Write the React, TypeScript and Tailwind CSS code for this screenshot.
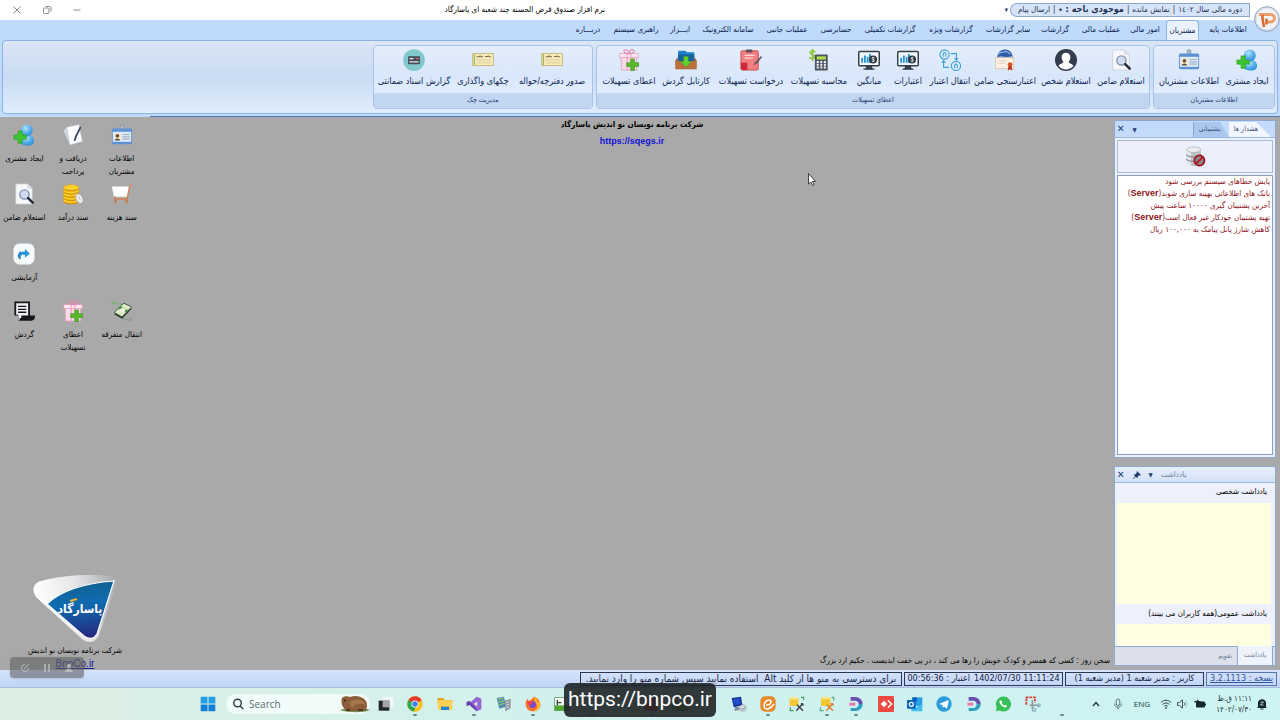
import React from "react";
import type { ReactNode } from "react";

type IconProps = { className?: string };
type Icon = (props: IconProps) => ReactNode;

const svg = (children: ReactNode): Icon =>
  function Drawing({ className = "size-6" }: IconProps) {
    return (
      <svg viewBox="0 0 24 24" className={className + " shrink-0"} fill="none" aria-hidden="true">
        {children}
      </svg>
    );
  };

const AddCustomer = svg(
  <>
    <defs>
      <radialGradient id="person" cx=".4" cy=".3" r=".8">
        <stop offset="0" stopColor="#b4e4ff" />
        <stop offset=".6" stopColor="#4ba9e8" />
        <stop offset="1" stopColor="#2b86cf" />
      </radialGradient>
    </defs>
    <path d="M8 19c0-5 3-7.500 7.500-7.500S23 15 23 18.500c0 3.500-3 5-7 5s-8-1.500-8-4.500z" fill="url(#person)" />
    <circle cx="15" cy="7" r="6.500" fill="url(#person)" />
    <path d="M5.500 7.500h4.500v4.500h4.500v4.500h-4.500v4.500h-4.500v-4.500H1V12h4.500z" fill="#3fc431" stroke="#2c9d22" strokeWidth=".7" />
  </>
);
const IdCard = svg(
  <>
    <path d="M10 1h4v5h-4z" fill="#aeb6bf" stroke="#7b858f" strokeWidth=".6" />
    <rect x="1" y="5" width="22" height="17" rx="1.500" fill="#5f92d4" />
    <rect x="2" y="8.500" width="20" height="11" fill="#dbe9f8" />
    <rect x="3.500" y="10" width="7" height="8" fill="#f6e7c8" />
    <circle cx="7" cy="12.800" r="2" fill="#6e4c33" />
    <path d="M4 18c0-3 6-3 6 0z" fill="#5b5346" />
    <path d="M12.500 11.500h8M12.500 14h8M12.500 16.500h8" stroke="#a9b4c2" strokeWidth="1.200" />
  </>
);
const SearchDoc = svg(
  <>
    <path d="M3 1h13l5 5v17H3z" fill="#f7f8fa" stroke="#c5cad2" strokeWidth=".8" />
    <path d="M16 1v5h5" fill="#dfe3e9" stroke="#c5cad2" strokeWidth=".6" />
    <circle cx="12.500" cy="12.500" r="5" fill="#cfdcf3" stroke="#7f90ab" strokeWidth="1.500" />
    <path d="M16.500 16.500l5 5" stroke="#262c3a" strokeWidth="2.800" strokeLinecap="round" />
  </>
);
const Person = svg(
  <>
    <circle cx="12" cy="12" r="12" fill="#343d4d" />
    <path d="M12 4c3 0 4.800 2 4.800 5 0 2-.8 3.800-2 5 .2 2 4.200 2 5.200 4.500C18 21 15 22.300 12 22.300S6 21 4 18.500C5 16 9 16 9.200 14c-1.200-1.200-2-3-2-5C7.200 6 9 4 12 4z" fill="#fff" />
  </>
);
const Certificate = svg(
  <>
    <circle cx="12" cy="9" r="8.500" fill="#2d5da8" />
    <path d="M5 6c3-5 5-1 7-3s3 2 6 2M4 10c5-4 8 2 16-2" stroke="#93bdec" strokeWidth="1.300" />
    <rect x="1.500" y="9.500" width="20" height="12" fill="#fbf1e4" stroke="#d6bda0" strokeWidth=".8" />
    <path d="M4 13h10M4 15.500h8" stroke="#d8c8b6" />
    <circle cx="17.500" cy="17" r="2.600" fill="#d6542c" />
    <path d="M15.800 18.500l-.8 5 2.500-1.500 2.500 1.500-.8-5z" fill="#b8321d" />
  </>
);
const Transfer = svg(
  <g stroke="#3da0d4" strokeWidth="1.200">
    <circle cx="6" cy="6" r="5" />
    <path d="M4.500 8.500V5.500a1.500 1.500 0 013 0V8.500M13 5h6v7m-2-2l2 2.300L21 10M11 20H5v-7m-2 2l2-2.300L7 15" />
    <circle cx="18.500" cy="18.500" r="5" />
    <path d="M17 21V18a1.500 1.500 0 013 0v3" />
  </g>
);
const Monitor = svg(
  <>
    <path d="M9 18h6l1 4H8z" fill="#39434f" />
    <rect x=".8" y="2.800" width="22.400" height="15.500" rx="1" fill="#f5fafd" stroke="#333d49" strokeWidth="1.600" />
    <path d="M4.500 15V9.500M7.500 15V7M10.500 15V8.500M13 15V5.500" stroke="#2593cf" strokeWidth="2" />
    <circle cx="16.500" cy="11.500" r="4.300" fill="#2c3540" />
    <path d="M18 9.800c-1-1-3-.6-2.800.5.200 1.200 2.800.9 2.800 2.200 0 1.200-2 1.400-3 .5M16.500 8.500v6" stroke="#fff" strokeWidth=".8" />
    <path d="M6 22h12" stroke="#333d49" strokeWidth="1.200" />
  </>
);
const Calculator = svg(
  <>
    <path d="M8 3.500C6 1.500 2 2 2.300 4.300c.2 2 5 1.700 5 4.200C7.300 11 3 11 1.500 9M5 0v13" stroke="#8fc63d" strokeWidth="1.800" />
    <rect x="7.500" y="6" width="14" height="17.500" rx="1" fill="#4c5560" />
    <rect x="9.500" y="8" width="10" height="3.500" fill="#b4d94c" />
    <path d="M9.500 14.200h10M9.500 17.200h10M9.500 20.200h10" stroke="#f4f6f8" strokeWidth="2" strokeDasharray="2.200 1.700" />
  </>
);
const Clipboard = svg(
  <>
    <rect x="1" y="2" width="19" height="21" rx="1.500" fill="#ef7f80" stroke="#c94e55" />
    <rect x="6.500" y=".6" width="7" height="3.200" rx="1" fill="#59515c" />
    <path d="M5 7h11M5 10h9" stroke="#fbd9d6" strokeWidth="1.500" />
    <path d="M1 15h7v8H2.500L1 21.500z" fill="#cf2737" />
    <path d="M23 7.500l-6.500 7-2 3.500 3.500-2 6-7z" fill="#5c5560" />
  </>
);
const Inbox = svg(
  <>
    <path d="M3.500 2h8l1.500 1.500h8V13h-18z" fill="#1f7fc4" />
    <path d="M3.500 6h17.500v7H3.500z" fill="#16639f" />
    <path d="M.5 12L3 9v4h18V9l2.500 3v10H.5z" fill="#9a5c30" />
    <rect x=".5" y="13" width="23" height="8.500" rx=".8" fill="#b9713d" />
    <path d="M9.500 8h5v5.500h3.500L12 19.500l-6-6h3.500z" fill="#63d42f" stroke="#31941a" strokeWidth=".6" />
  </>
);
const Gift = svg(
  <>
    <rect x="3.500" y="8" width="17" height="15" fill="#fbd9e8" stroke="#df9bbd" strokeWidth=".8" />
    <rect x="2" y="5" width="20" height="4.500" fill="#fde6f0" stroke="#df9bbd" strokeWidth=".8" />
    <path d="M10 5v18M14 5v18" stroke="#e893b9" />
    <path d="M12 5C8 5 5 3 7 1.300S12 2 12 5zm0 0c4 0 7-2 5-3.700S12 2 12 5z" stroke="#e08bb2" strokeWidth="1.200" />
    <path d="M14 11h4v4h4.500v4H18v4.500h-4V19H9.500v-4H14z" fill="#58ba2b" stroke="#3f961b" strokeWidth=".7" />
  </>
);
const Cheque = svg(
  <>
    <rect x=".7" y="5" width="22.600" height="13" fill="#f6ebbb" stroke="#c9b679" />
    <path d="M2.500 5.500v12" stroke="#8fae58" strokeWidth="1.200" />
    <path d="M5 8.500h3l.8-1 1 1H12m2-.3h3l.7-.7 1 1h2" stroke="#7e7250" strokeWidth="1.100" />
    <path d="M5 12h15.500M5 15h15.500" stroke="#d5c48a" strokeWidth=".8" />
  </>
);
const Deposit = svg(
  <>
    <circle cx="12" cy="12" r="11.800" fill="#80c8cb" />
    <rect x="5.500" y="8" width="13" height="8.500" rx=".8" fill="#454b58" />
    <path d="M7 10.500h4.500M7 14h10" stroke="#e8eaec" strokeWidth="1.300" />
    <path d="M14 10.500h3" stroke="#e46a5d" strokeWidth="1.300" />
  </>
);
const Paper = svg(
  <>
    <path d="M1.500 7l5-4 7 16-5 3z" fill="#cfd6e2" />
    <path d="M5 3.500L18.500.5l3.800 18.500L8.500 23z" fill="#fbfcfe" stroke="#b9c0cc" strokeWidth=".7" />
    <path d="M20 4l-5 10-1 3.500" stroke="#39465d" strokeWidth="2" strokeLinecap="round" />
  </>
);
const Coins = svg(
  <>
    {[19, 15.5, 12, 8.5, 5].map((y) => (
      <g key={y}>
        <ellipse cx="10" cy={y + 1} rx="8.500" ry="3.300" fill="#d08f05" />
        <ellipse cx="10" cy={y} rx="8.500" ry="3" fill="#fdd22e" stroke="#e5a60e" strokeWidth=".6" />
      </g>
    ))}
    <ellipse cx="19" cy="17" rx="3.600" ry="5.500" transform="rotate(-24 19 17)" fill="#eef0f0" stroke="#a5a9ab" />
    <path d="M18 14l2 5" stroke="#b4b7b9" />
  </>
);
const Cart = svg(
  <>
    <path d="M1 4h18.500l-2 11H3.500z" fill="#fff" stroke="#eee5df" strokeWidth=".6" />
    <path d="M22.500 1.500l-2 1.500L17.500 17.500H4l1-3" stroke="#dc7c49" strokeWidth="1.300" />
    <path d="M5.500 18l-1 4M16.500 18l1 4" stroke="#c9764a" strokeWidth="2.200" />
  </>
);
const Share = svg(
  <>
    <rect x=".5" y=".5" width="23" height="23" rx="7" fill="#f6fafd" />
    <path d="M13 6.500l5.500 5-5.500 4.500v-3c-3.500-.4-5.200.8-4.500 4-4.500-2.500-3-7.500 4.500-7.700z" fill="#2c97d8" />
    <path d="M8.300 17.500c-3.800-2.600-2.500-6.500.7-7.800" stroke="#1a72b8" strokeWidth="1.300" />
  </>
);
const Scroll = svg(
  <>
    <path d="M1.500 1.500h17V17H24c0 4-1.500 5.500-4 5.500H5.500c2.500 0 2.500-2 2.500-5.500H1.500z" fill="#15171b" />
    <path d="M3.500 3.500h13V17H9v2.500H7L6 16H3.500z" fill="#f1f2f4" />
    <path d="M5.500 7h9M5.500 10.200h9M5.500 13.400h9" stroke="#15171b" strokeWidth="1.500" />
  </>
);
const Money = svg(
  <>
    <path d="M1 3l11 1.500M1 3l3-2M1 3l2.500 2.500" stroke="#7fb07d" strokeWidth="1.300" />
    <path d="M3.500 15.500L14 5.500l8.500 4-10.500 11z" fill="#24352a" />
    <path d="M3.500 13.500L14 3.500l8.500 4-10.500 11z" fill="#dce9c4" stroke="#35563a" />
    <path d="M8 9.500l8.500 4.500 2.500-2.500-8.500-4.500z" fill="#4a8d43" />
    <ellipse cx="12.800" cy="11" rx="3" ry="2.200" fill="#eef5df" />
    <path d="M13 20.500l10 1.500m-2.500-3l2.500 3-3 1.500" stroke="#8a9c93" strokeWidth="1.300" />
  </>
);
const DatabaseBlocked = svg(
  <>
    <path d="M2 4v15c0 5 16 5 16 0V4z" fill="#bfc1c5" />
    <path d="M2 4v15c0 2 2 3.500 5 3.800V6z" fill="#e7e8ea" />
    <ellipse cx="10" cy="4.200" rx="8" ry="3.200" fill="#ededf0" stroke="#a8abb0" strokeWidth=".8" />
    <path d="M2 9.500c0 4 16 4 16 0M2 14.500c0 4 16 4 16 0" stroke="#7b7f86" strokeWidth="1.200" />
    <circle cx="16.500" cy="16.500" r="5.800" fill="#8f8587" stroke="#9c1620" strokeWidth="2" />
    <path d="M12.700 20.200l7.600-7.400" stroke="#b4141f" strokeWidth="2" />
  </>
);

/* Taskbar icons */
const Windows = svg(
  <g fill="#1581d6">
    <path d="M1 1h10.300v10.300H1zM12.700 1H23v10.300H12.700z" fill="#25a0e6" />
    <path d="M1 12.700h10.300V23H1zM12.700 12.700H23V23H12.700z" />
  </g>
);
const TaskView = svg(
  <>
    <rect x="7" y="2" width="16" height="15" fill="#f5f6f6" />
    <rect x="1" y="7" width="16" height="15" fill="#20252a" />
    <rect x="7" y="7" width="10" height="10" fill="#a4a7aa" />
  </>
);
const Chrome = svg(
  <>
    <circle cx="12" cy="12" r="11.500" fill="#fbc116" />
    <path d="M12 12L2 6.200A11.500 11.500 0 0122 6.200z" fill="#e33b2e" />
    <path d="M12 12L2 6.200A11.500 11.500 0 0010 23.300l3-6z" fill="#2da94f" />
    <circle cx="12" cy="12" r="5.300" fill="#fff" />
    <circle cx="12" cy="12" r="4.100" fill="#3b7de9" />
  </>
);
const Explorer = svg(
  <>
    <path d="M1 3h8l2.500 3H23v5H1z" fill="#e2a216" />
    <rect x="1" y="6.500" width="22" height="14.500" rx="1" fill="#fcd155" />
    <path d="M6 21v-5h12v5z" fill="#2581d2" />
  </>
);
const VisualStudio = svg(
  <>
    <path d="M16 1l7 3v16l-7 3L5 13 2.500 15 1 14V9.500L2.500 9 5 11z" fill="#9467d3" />
    <path d="M1 9l4-2 11 12v4L5 13l-4 2z" fill="#6a3fae" />
    <path d="M17 8v8l-5-4z" fill="#e6dcf7" />
  </>
);
const Servers = svg(
  <>
    <path d="M1 3l11-2 3 15-10 3z" fill="#4c8fae" />
    <path d="M3 5l8-1.500M4 9l8-1.500M5 13l8-2" stroke="#a9c964" strokeWidth="1.500" />
    <path d="M13 7l9-3v14l-8 5z" fill="#8b969e" />
    <path d="M15 10l5-1.500M15 14l5-1.500M15 18l5-2" stroke="#dfe5e8" strokeWidth="1.300" />
  </>
);
const Firefox = svg(
  <>
    <path d="M14 1c5 2 9 6 9 12 0 5-4 10-11 10S1 18 1 12c0-3 1-6 3-8l1 3 4-1c1-2 3-4 5-5z" fill="#f6702d" />
    <path d="M14 1c4 3 5 6 4 9 3-1 3-3 3-4 4 7 1 17-9 17 7-3 8-9 4-13-2-2-3-5-2-9z" fill="#fcb92c" />
    <circle cx="11.500" cy="13" r="5" fill="#7b4bc8" />
    <path d="M3 9c4-2 6 0 9 1-2 3-5 2-6 4z" fill="#ee3f4f" />
  </>
);
const GreenApp = svg(
  <>
    <rect x="1" y="2" width="22" height="20" fill="#f4f8f2" stroke="#588e47" />
    <path d="M1 14h22v8H1z" fill="#4fa834" />
    <path d="M5 6v8M5 10h6" stroke="#39453a" strokeWidth="2" />
  </>
);
const RedApp = svg(<rect x="2" y="2" width="20" height="20" fill="#e0383f" />);
const Remote = svg(
  <>
    <path d="M1 3l14-2 2 13-13 3z" fill="#17318f" />
    <path d="M3 5l10-2 1 9-9 2z" fill="#2450cc" />
    <path d="M6 17l5-1 3 5-9 1z" fill="#7f8b9c" />
    <circle cx="18" cy="18" r="5" fill="#d7dce1" stroke="#949ca4" />
    <path d="M15.500 18.500l2 2 3.500-4" stroke="#6d7882" strokeWidth="1.300" />
  </>
);
const Eitaa = svg(
  <>
    <rect x=".5" y=".5" width="23" height="23" rx="7" fill="#e58a2b" />
    <path d="M10 13.500c4 0 7.500-2.500 6.500-5.500s-8-2.500-10 3.500 1.500 9 6 7.500 6.500-4 8-6.500" stroke="#fff" strokeWidth="2.300" strokeLinecap="round" />
  </>
);
const Tools = svg(
  <>
    <path d="M1 3h13v12H1z" fill="#f5c733" />
    <ellipse cx="7.500" cy="3.500" rx="6.500" ry="2" fill="#fbe58d" />
    <path d="M18 2h4v4M2 17v5h5" stroke="#3b9c5c" strokeWidth="1.800" />
    <path d="M11 22l10-11M12 13l9 9M18 11l4 3" stroke="#3d4247" strokeWidth="2.200" />
  </>
);
const ToolsOrange = svg(
  <>
    <path d="M3 2h14v13H3z" fill="#f5c733" />
    <ellipse cx="10" cy="3" rx="7" ry="2" fill="#fbe58d" />
    <path d="M19 2h3v5M2 17v5h5" stroke="#59a97a" strokeWidth="1.800" />
    <path d="M11 22l10-11M12 13l9 9M18 11l4 3" stroke="#da7c2d" strokeWidth="2.200" />
  </>
);
const DLogo = svg(
  <>
    <path d="M4 1.500h7c6 0 11 4.500 11 10.500h-6c0-3-2-5-5-5H4z" fill="#6a4fb0" />
    <path d="M22 12c0 6-5 10.500-11 10.500H4V18h7c3 0 5-3 5-6z" fill="#2f9fc0" />
    <path d="M2 10h9v4.500H2z" fill="#e87bab" />
  </>
);
const AnyDesk = svg(
  <>
    <rect width="24" height="24" rx="1.500" fill="#ed4841" />
    <path d="M9 7l5 5-5 5-5-5zM14 7l1.500-1.500L22 12l-6.500 6.500L14 17l5-5z" fill="#fff" />
  </>
);
const Outlook = svg(
  <>
    <path d="M8 2h15v13H8z" fill="#28a0e8" />
    <path d="M8 2h7v6H8z" fill="#0c62b3" />
    <path d="M5 12l9 5 9-5v11H7z" fill="#40bdf2" />
    <rect x="0" y="6" width="13" height="13" rx="1" fill="#0b64b8" />
    <circle cx="6.500" cy="12.500" r="3" stroke="#fff" strokeWidth="1.800" />
  </>
);
const Telegram = svg(
  <>
    <circle cx="12" cy="12" r="11.500" fill="#2f9cdb" />
    <path d="M4.500 12l13.500-5.500c.8-.2 1.200.2 1 1l-2.200 10.200c-.2.800-.8 1-1.400.5L12 15.800l-1.800 1.800-.6-4z" fill="#fff" />
  </>
);
const WhatsApp = svg(
  <>
    <path d="M1 23l1.700-5.800A11.300 11.300 0 1112 23.300a11 11 0 01-5-1.500z" fill="#39bf57" />
    <path d="M7.500 6.500c-2 2 0 6 3 8.500s6 3 7.500.500c.3-1-1.800-2.200-2.800-2-1 1-1.200 1.500-3.500-.6s-1.500-2.400-.8-3.300c0-1-1.500-4-3.400-3.100z" fill="#fff" />
  </>
);
const Snip = svg(
  <>
    <path d="M2 13V2h13v8" stroke="#d9473c" strokeWidth="2.800" strokeDasharray="4 1.200" />
    <path d="M11 6v13M7 14h15" stroke="#8a949d" strokeWidth="2.300" />
    <circle cx="13.500" cy="20.500" r="2.500" stroke="#7f9fb8" strokeWidth="1.600" />
    <circle cx="20.500" cy="14" r="2.500" stroke="#8fb2cb" strokeWidth="1.600" />
  </>
);
const Blank = svg(null);
const Wifi = svg(
  <g stroke="#2e4248" strokeWidth="2">
    <path d="M2 9c6-6 14-6 20 0M5 13c4-4 10-4 14 0M8.500 16.500c2-2 5-2 7 0" />
    <circle cx="12" cy="20" r="1" />
  </g>
);
const Speaker = svg(
  <g stroke="#2e4248" strokeWidth="1.800">
    <path d="M3 9h4l6-5v16l-6-5H3z" />
    <path d="M16 9c2 2 2 4 0 6" />
    <path d="M19 5c4 4 4 10 0 14" stroke="#9eb4b7" />
  </g>
);
const Battery = svg(
  <>
    <rect x="4" y="7" width="18" height="12" rx="2" fill="#16282c" />
    <path d="M22 11h2v4h-2zM1 6h4l2-3 3 3h3v3H8v4H4V9H1z" fill="#16282c" />
  </>
);
const Mic = svg(
  <g stroke="#49636a" strokeWidth="1.700">
    <rect x="8.500" y="2" width="7" height="13" rx="3.500" />
    <path d="M5 11c0 10 14 10 14 0M12 18.500V23" />
  </g>
);
const Bell = svg(
  <>
    <path d="M4 18V10c0-10 16-10 16 0v8l2 2H2z" fill="#15262b" />
    <path d="M9 22h6" stroke="#15262b" strokeWidth="2" />
    <path d="M9 8h6l-6 6h6" stroke="#d5f3f0" strokeWidth="1.600" />
  </>
);
const Beaver = () => (
  <svg viewBox="0 0 30 18" className="h-[18px] w-[30px] shrink-0" aria-hidden="true">
    <path d="M0 15c8-3 22-3 30 0-6 3-22 3-30 0z" fill="#6e8b4c" />
    <path d="M2 3c2-2 5-2 8-1 8-3 17 1 17 8 0 5-2 6-4 6H8C4 15 0 9 2 3z" fill="#8a5d38" />
    <path d="M9 8c5-6 15-4 17 2-5-2-10-2-14 3z" fill="#a5764a" />
    <circle cx="5" cy="5.500" r="1" fill="#2d1c11" />
    <path d="M6 14h4v2H6zM18 14h5v2h-5z" fill="#513520" />
  </svg>
);

type Tab = { label: string; width: string; active?: boolean };
const tabs: Tab[] = [
  { label: "اطلاعات پایه", width: "w-[46px] ml-1.5" },
  { label: "مشتریان", width: "w-[33px]", active: true },
  { label: "امور مالی", width: "w-[42px]" },
  { label: "عملیات مالی", width: "w-[46px]" },
  { label: "گزارشات", width: "w-[46px]" },
  { label: "سایر گزارشات", width: "w-12" },
  { label: "گزارشات ویژه", width: "w-[66px]" },
  { label: "گزارشات تکمیلی", width: "w-14" },
  { label: "حسابرسی", width: "w-[52px]" },
  { label: "عملیات جانبی", width: "w-[46px]" },
  { label: "سامانه الکترونیک", width: "w-[72px]" },
  { label: "ابـــزار", width: "w-6" },
  { label: "راهبری سیستم", width: "w-16" },
  { label: "دربـــاره", width: "w-8" },
];

type Command = { label: string; width: string; icon: Icon };
type Group = { title: string; commands: Command[] };
const groups: Group[] = [
  {
    title: "اطلاعات مشتریان",
    commands: [
      { label: "ایجاد مشتری", width: "w-[50px]", icon: AddCustomer },
      { label: "اطلاعات مشتریان", width: "w-[66px]", icon: IdCard },
    ],
  },
  {
    title: "اعطای تسهیلات",
    commands: [
      { label: "استعلام ضامن", width: "w-[52px]", icon: SearchDoc },
      { label: "استعلام شخص", width: "w-[58px]", icon: Person },
      { label: "اعتبارسنجی ضامن", width: "w-16", icon: Certificate },
      { label: "انتقال اعتبار", width: "w-[46px]", icon: Transfer },
      { label: "اعتبارات", width: "w-[38px]", icon: Monitor },
      { label: "میانگین", width: "w-10", icon: Monitor },
      { label: "محاسبه تسهیلات", width: "w-[60px]", icon: Calculator },
      { label: "درخواست تسهیلات", width: "w-[76px]", icon: Clipboard },
      { label: "کارتابل گردش", width: "w-[54px]", icon: Inbox },
      { label: "اعطای تسهیلات", width: "w-[60px]", icon: Gift },
    ],
  },
  {
    title: "مدیریت چک",
    commands: [
      { label: "صدور دفترچه/حواله", width: "w-[76px]", icon: Cheque },
      { label: "چکهای واگذاری", width: "w-[62px]", icon: Cheque },
      { label: "گزارش اسناد ضمانتی", width: "w-[76px]", icon: Deposit },
    ],
  },
];

type Shortcut = { label: string; icon: Icon; column?: string; wrap?: boolean };
const shortcuts: Shortcut[] = [
  { label: "اطلاعات مشتریان", icon: IdCard, wrap: true },
  { label: "دریافت و پرداخت", icon: Paper, wrap: true },
  { label: "ایجاد مشتری", icon: AddCustomer },
  { label: "سند هزینه", icon: Cart },
  { label: "سند درآمد", icon: Coins },
  { label: "استعلام ضامن", icon: SearchDoc },
  { label: "آزمایشی", icon: Share, column: "col-start-3" },
  { label: "انتقال متفرقه", icon: Money },
  { label: "اعطای تسهیلات", icon: Gift, wrap: true },
  { label: "گردش", icon: Scroll },
];

type TaskIcon = { name: string; icon: Icon; running?: boolean };
const taskIcons: TaskIcon[] = [
  { name: "Task view", icon: TaskView },
  { name: "Chrome", icon: Chrome, running: true },
  { name: "Explorer", icon: Explorer },
  { name: "Visual Studio", icon: VisualStudio, running: true },
  { name: "Servers", icon: Servers },
  { name: "Firefox", icon: Firefox, running: true },
  { name: "Editor", icon: GreenApp },
  { name: "App 1", icon: Blank, running: true },
  { name: "App 2", icon: Blank },
  { name: "App 3", icon: RedApp, running: true },
  { name: "App 4", icon: GreenApp },
  { name: "App 5", icon: Blank },
  { name: "Remote", icon: Remote },
  { name: "Eitaa", icon: Eitaa, running: true },
  { name: "Tools", icon: Tools },
  { name: "Database tools", icon: ToolsOrange, running: true },
  { name: "Dashboard", icon: DLogo, running: true },
  { name: "AnyDesk", icon: AnyDesk },
  { name: "Outlook", icon: Outlook },
  { name: "Telegram", icon: Telegram },
  { name: "Dashboard 2", icon: DLogo },
  { name: "WhatsApp", icon: WhatsApp },
  { name: "Snipping tool", icon: Snip },
  { name: "Background app", icon: Blank, running: true },
];

function TitleBar() {
  return (
    <header className="relative flex h-5 items-center bg-white pr-[30px] text-[8px] text-[#1d2f50]">
      <div className="flex h-[14px] w-[240px] items-center justify-center gap-[3px] rounded-l-full rounded-r-md border border-[#8ba7d0] bg-[#d6e4f9] whitespace-nowrap">
        <span>دوره مالی سال ۱٤۰۲</span>
        <span>|</span>
        <span>نمایش مانده</span>
        <span>|</span>
        <b className="text-[9px]">موجودی باجه : ٭</b>
        <span>|</span>
        <span>ارسال پیام</span>
      </div>
      <button aria-label="بیشتر" className="mr-0.5 text-[7px]">▾</button>
      <h1 className="absolute left-[41%] -translate-x-1/2 text-[8px] whitespace-nowrap text-black">
        نرم افزار صندوق قرض الحسنه چند شعبه ای پاسارگاد
      </h1>
      <div className="mr-auto flex items-center gap-5 pl-3 text-[#8b8b8b]" dir="ltr">
        <button aria-label="Close">
          <svg viewBox="0 0 10 10" className="size-2.5" stroke="currentColor"><path d="M1.500 1.500l7 7m0-7l-7 7" /></svg>
        </button>
        <button aria-label="Restore">
          <svg viewBox="0 0 10 10" className="size-2.5" stroke="currentColor" fill="none"><rect x="1.500" y="3" width="5.500" height="5.500" rx="1" /><path d="M3.500 1.500h4c1 0 1.500.5 1.500 1.500v3.500" /></svg>
        </button>
        <button aria-label="Minimize">
          <svg viewBox="0 0 10 10" className="size-2.5" stroke="currentColor"><path d="M1.500 5h7" /></svg>
        </button>
      </div>
      <button aria-label="منو" className="absolute top-[6px] right-0 z-10">
        <svg viewBox="0 0 26 26" className="size-[26px]" fill="none">
          <circle cx="13" cy="13" r="12.300" fill="#dfe6f1" stroke="#8f9fb9" />
          <circle cx="13" cy="13" r="10" fill="#f3f5f9" />
          <path d="M5 8.500h11c6 0 6 7.500 0 7.500h-4" stroke="#e9a06b" strokeWidth="3" />
          <path d="M8.500 9v4l1.500 8M12.500 12.500v6" stroke="#d76f35" strokeWidth="2.600" />
        </svg>
      </button>
    </header>
  );
}

function Ribbon() {
  return (
    <div className="bg-[#bfdafb]">
      <nav className="flex h-5 pr-[29px] text-[8px] text-[#0c2352]">
        {tabs.map((t) => (
          <button
            key={t.label}
            className={
              t.width +
              " flex shrink-0 items-center justify-center whitespace-nowrap " +
              (t.active ? "rounded-t-sm border border-b-0 border-[#8db2e3] bg-[#e9f1fc]" : "")
            }
          >
            {t.label}
          </button>
        ))}
      </nav>
      <div className="mx-0.5 flex h-[74px] gap-[3px] rounded-sm border border-[#8db2e3] bg-linear-to-b from-[#dbe6f6] via-[#c9dbf2] to-[#e0eefd] px-0.5 pt-1 pb-1">
        {groups.map((g) => (
          <section key={g.title} className="flex flex-col overflow-hidden rounded-sm border border-[#a9c4e8] bg-linear-to-b from-[#e4eefb] via-[#d8e7fa] to-[#e9f4fe]">
            <div className="flex flex-1 px-0.5">
              {g.commands.map((c) => (
                <button key={c.label} className={c.width + " flex shrink-0 flex-col items-center gap-0.5 pt-[3px] text-[9px] leading-4 whitespace-nowrap text-[#0c2352]"}>
                  <c.icon className="size-[22px]" />
                  {c.label}
                </button>
              ))}
            </div>
            <h2 className="h-[15px] bg-[#c2d6f1] text-center text-[7px] leading-[14px] text-[#1c3b70]">{g.title}</h2>
          </section>
        ))}
      </div>
      <div className="mr-auto flex h-[3px]">
        <div className="flex-1 border-b border-[#4f78b5]" />
        <div className="w-[150px]" />
      </div>
    </div>
  );
}

function AlertsPanel() {
  return (
    <section className="flex h-[338px] shrink-0 flex-col border border-[#8ea9d3] bg-[#eaf0fc]">
      <div className="flex h-[17px] items-end border-b border-[#9db8dd] bg-[#c3dafa] pr-1 text-[7px] whitespace-nowrap text-[#3d4f74]">
        <button className="h-[15px] w-[42px] bg-[#f1f6fe] pr-2 [clip-path:polygon(0_0,65%_0,100%_100%,0_100%)]">هشدار ها</button>
        <button className="h-[15px] w-[36px] border-l border-[#8ba7d0] bg-[#a9c7ef] pr-1 [clip-path:polygon(0_0,75%_0,100%_100%,0_100%)]">پشتیبانی</button>
        <div className="mr-auto flex h-full items-center gap-2 pl-0.5 text-[#223d6b]">
          <button aria-label="فهرست" className="text-[6px]">▼</button>
          <button aria-label="بستن" className="text-[10px] leading-none">✕</button>
        </div>
      </div>
      <div className="flex flex-1 flex-col p-0.5">
        <button aria-label="قطع پایگاه داده" className="flex h-[33px] items-center justify-center border border-[#a9b9d6] bg-[#ecf0fa]">
          <DatabaseBlocked className="size-[21px]" />
        </button>
        <ul className="mt-0.5 flex-1 border border-[#8c9fc0] bg-white pr-0.5 text-[8px] leading-3 whitespace-nowrap text-[#8d1420]">
          <li>پایش خطاهای سیستم بررسی شود</li>
          <li>بانک های اطلاعاتی بهینه سازی شوند(<b className="font-['Liberation_Sans',sans-serif] text-[9px] leading-none">Server</b>)</li>
          <li>آخرین پشتیبان گیری ۱۰۰۰۰ ساعت پیش</li>
          <li>تهیه پشتیبان خودکار غیر فعال است(<b className="font-['Liberation_Sans',sans-serif] text-[9px] leading-none">Server</b>)</li>
          <li>کاهش شارژ پانل پیامک به ۱۰۰,۰۰۰ ریال</li>
        </ul>
      </div>
    </section>
  );
}

function NotesPanel() {
  return (
    <section className="flex min-h-0 flex-1 flex-col overflow-hidden border border-[#8ea9d3] bg-[#eef1fb]">
      <div className="flex h-4 shrink-0 items-center justify-end gap-2 border-b border-[#9db8dd] bg-linear-to-b from-[#e6effc] to-[#d3e1f6] pl-0.5 text-[#223d6b]">
        <h2 className="text-[8px] text-[#7181a0]">یادداشت</h2>
        <button aria-label="فهرست" className="text-[6px]">▼</button>
        <button aria-label="سنجاق">
          <svg viewBox="0 0 8 8" className="size-2" fill="currentColor"><path d="M4 0l4 4-1 .5-1-.3L4.500 6v1.500L2.800 5.800.5 8 0 7.500l2.200-2.300L.5 3.500H2L3.800 2 3.500 1z" /></svg>
        </button>
        <button aria-label="بستن" className="text-[10px] leading-none">✕</button>
      </div>
      <label htmlFor="private-note" className="h-5 shrink-0 pr-2 text-[8px] leading-[18px] text-black">یادداشت شخصی</label>
      <textarea id="private-note" className="mr-1 ml-0.5 h-[101px] shrink-0 resize-none bg-[#ffffe1] outline-none" />
      <label htmlFor="public-note" className="h-5 shrink-0 pr-2 text-[8px] leading-[20px] whitespace-nowrap text-black">یادداشت عمومی(همه کاربران می بینند)</label>
      <textarea id="public-note" className="mr-1 ml-0.5 min-h-0 flex-1 resize-none bg-[#ffffe1] outline-none" />
      <div className="flex h-[19px] shrink-0 border-t border-[#8ea9d3] bg-[#dbe0ea] pr-0.5 text-[7px] text-[#6f7f9c]">
        <button className="-mt-px w-9 border-x border-[#8ea9d3] bg-[#eef3fc]">یادداشت</button>
        <button className="w-6">تقویم</button>
      </div>
    </section>
  );
}

function Logo() {
  return (
    <svg viewBox="0 0 84 70" className="h-[70px] w-[84px]" role="img" aria-label="پاسارگاد">
      <defs>
        <linearGradient id="shield" x1=".4" y1="0" x2=".5" y2="1">
          <stop offset="0" stopColor="#11608f" />
          <stop offset=".4" stopColor="#0f6cb0" />
          <stop offset="1" stopColor="#26287f" />
        </linearGradient>
        <linearGradient id="silver" x1="0" y1=".2" x2="1" y2="0">
          <stop offset="0" stopColor="#fff" />
          <stop offset=".5" stopColor="#e5e6e8" />
          <stop offset="1" stopColor="#a4a8ac" />
        </linearGradient>
      </defs>
      <path d="M8 7C30 1 55 0 78 2c6 1 7 4 5 10L66 61c-3 8-11 9-17 4L4 24C-2 17 0 9 8 7z" fill="url(#silver)" />
      <path d="M14 30C30 15 54 9 81 7L64 60c-3 5-8 6-13 2z" fill="url(#shield)" stroke="#fff" strokeWidth="1.200" />
      <text x="47" y="39" textAnchor="middle" fontFamily="DejaVu Sans Condensed, DejaVu Sans, sans-serif" fontSize="12" fontWeight="bold" fill="#fff">پاسارگاد</text>
      <path d="M37 27l7-2" stroke="#f2b42b" strokeWidth="2" />
    </svg>
  );
}

function Workspace() {
  return (
    <main className="relative flex min-h-0 flex-1 bg-[#a9a9a9]">
      <aside className="flex w-[166px] shrink-0 flex-col gap-2 pt-[3px] pr-1 pb-1">
        <AlertsPanel />
        <NotesPanel />
      </aside>
      <div className="relative flex flex-1 flex-col items-center">
        <h2 className="text-[8px] leading-4 font-bold text-black">شرکت برنامه نویسان نو اندیش پاسارگاد</h2>
        <a href="https://sqegs.ir" className="font-['Liberation_Sans',sans-serif] text-[9px] leading-4 font-bold text-[#1111d8]">https://sqegs.ir</a>
        <svg viewBox="0 0 8 13" className="absolute top-[56px] left-[68.3%] h-[13px] w-2" aria-hidden="true">
          <path d="M.5.500v10.500l2.300-2 1.700 3.500 1.500-.7-1.600-3.300h3.100z" fill="#fff" stroke="#222" strokeWidth=".8" />
        </svg>
        <p className="mt-auto self-start pr-1 pb-0.5 text-[8px] leading-[14px] whitespace-nowrap text-black">سخن روز : کسی که همسر و کودک خویش را رها می کند ، در پی خفت ابدیست . حکیم ارد بزرگ</p>
      </div>
      <aside className="flex w-[150px] shrink-0 flex-col pt-[7px]">
        <div className="mr-1 grid grid-cols-3 grid-rows-[59px_60px_57px_60px]">
          {shortcuts.map((s) => (
            <button key={s.label} className={(s.column ?? "") + " flex flex-col items-center justify-start gap-1.5 px-1 text-[8px] leading-[13px] text-black"}>
              <s.icon className="size-[22px]" />
              <span className={s.wrap ? "w-9" : "whitespace-nowrap"}>{s.label}</span>
            </button>
          ))}
        </div>
        <div className="mt-auto flex flex-col items-center text-black">
          <Logo />
          <p className="text-[8px] leading-[14px] whitespace-nowrap">شرکت برنامه نویسان نو اندیش</p>
          <a href="https://bnpco.ir" className="font-['Liberation_Sans',sans-serif] text-[10px] leading-3 text-[#1b1b99] underline">BnpCo.ir</a>
        </div>
      </aside>
      <div className="absolute -bottom-2 left-2.5 z-10 flex h-[21px] w-[74px] items-center justify-around rounded bg-[#5f6063]/60 px-1 text-[#b9bbbd] shadow" dir="ltr">
        <svg viewBox="0 0 10 10" className="size-2.5" fill="none" stroke="currentColor"><path d="M8.500 5A3.500 3.500 0 115 1.500M4 6l5-5" /></svg>
        <svg viewBox="0 0 10 10" className="size-2.5" stroke="currentColor" strokeWidth="1.500"><path d="M3 1v8M7 1v8" /></svg>
        <svg viewBox="0 0 10 10" className="size-2.5" fill="currentColor"><circle cx="5" cy="3" r="2" /><path d="M1 9c0-4 8-4 8 0z" /></svg>
      </div>
    </main>
  );
}

function StatusBar() {
  return (
    <footer className="flex h-[18px] items-center gap-0.5 border-b border-[#a9bfdd] bg-linear-to-b from-[#d6e4fb] to-[#c0d3f6] pr-[3px] text-[9px] whitespace-nowrap text-[#17233c]">
      <a href="#version" className="flex h-[14px] w-[71px] items-center justify-center border border-[#5877aa] text-[#31589c] underline">نسخه : 3.2.1113</a>
      <span className="flex h-[14px] w-[139px] items-center justify-center border border-[#2b3850]">کاربر : مدیر شعبه 1 (مدیر شعبه 1)</span>
      <span className="flex h-[14px] w-[159px] items-center justify-center gap-1 border border-[#2b3850]">
        <bdi>1402/07/30 11:11:24</bdi>
        <span>اعتبار : 00:56:36</span>
      </span>
      <span className="flex h-[14px] w-[322px] items-center justify-center border border-[#2b3850] text-[10px]">برای دسترسی به منو ها از کلید Alt &nbsp;استفاده نمایید سپس شماره منو را وارد نمایید.</span>
    </footer>
  );
}

function Taskbar() {
  return (
    <div className="relative flex h-8 items-center bg-linear-to-r from-[#deefe4] via-[#cff1ef] to-[#cdf3f3] pl-[200px] font-['Open_Sans',sans-serif]" dir="ltr">
      <button aria-label="Start"><Windows className="size-4" /></button>
      <div className="ml-2.5 flex h-5 w-[144px] items-center rounded-full bg-[#f1fbfa] pl-1.5">
        <svg viewBox="0 0 12 12" className="size-3 shrink-0" fill="none" stroke="#2c3c40" strokeWidth="1.400"><circle cx="5.500" cy="5" r="3.800" /><path d="M8.200 8l3 3" /></svg>
        <input aria-label="Search" placeholder="Search" className="ml-[5px] w-0 flex-1 bg-transparent text-[10px] outline-none placeholder:text-[#5c6a6d]" />
        <Beaver />
      </div>
      <div className="ml-[7px] flex w-[694px] shrink-0 justify-between">
        {taskIcons.map((t) => (
          <button key={t.name} aria-label={t.name} className="relative flex w-[18px] justify-center">
            <t.icon className="size-4" />
            {t.running && <span className="absolute -bottom-1 h-0.5 w-1 rounded-full bg-[#6c8a8c]" />}
          </button>
        ))}
      </div>
      <div className="ml-auto flex items-center pr-3 text-[#22363b]">
        <svg viewBox="0 0 8 8" className="mr-3 size-2" fill="none" stroke="currentColor" strokeWidth="1.300"><path d="M1 6l3-3.500L7 6" /></svg>
        <Mic className="mr-2.5 size-3" />
        <span className="mr-2.5 text-[8px]">ENG</span>
        <Wifi className="mr-1 size-3" />
        <Speaker className="mr-1.5 size-3" />
        <Battery className="mr-2 size-3" />
        <time className="mr-1 w-[38px] text-right font-['DejaVu_Sans_Condensed','DejaVu_Sans',sans-serif] text-[8px] leading-[11px] whitespace-nowrap" dir="rtl">
          <span className="block text-right">۱۱:۱۱ ق.ظ</span>
          <span className="block text-right"><bdo dir="ltr">۱۴۰۲/۰۷/۳۰</bdo></span>
        </time>
        <Bell className="size-3" />
      </div>
      <p className="absolute bottom-[3px] left-1/2 flex h-[34px] w-[152px] -translate-x-1/2 items-center justify-center rounded-md bg-[#1e2326]/90 font-['Roboto',sans-serif] text-[21px] text-white">
        https://bnpco.ir
      </p>
    </div>
  );
}

export default function App() {
  return (
    <div dir="rtl" className="flex h-screen min-h-[600px] flex-col overflow-hidden font-['DejaVu_Sans_Condensed','DejaVu_Sans',sans-serif]">
      <TitleBar />
      <Ribbon />
      <Workspace />
      <StatusBar />
      <Taskbar />
    </div>
  );
}
